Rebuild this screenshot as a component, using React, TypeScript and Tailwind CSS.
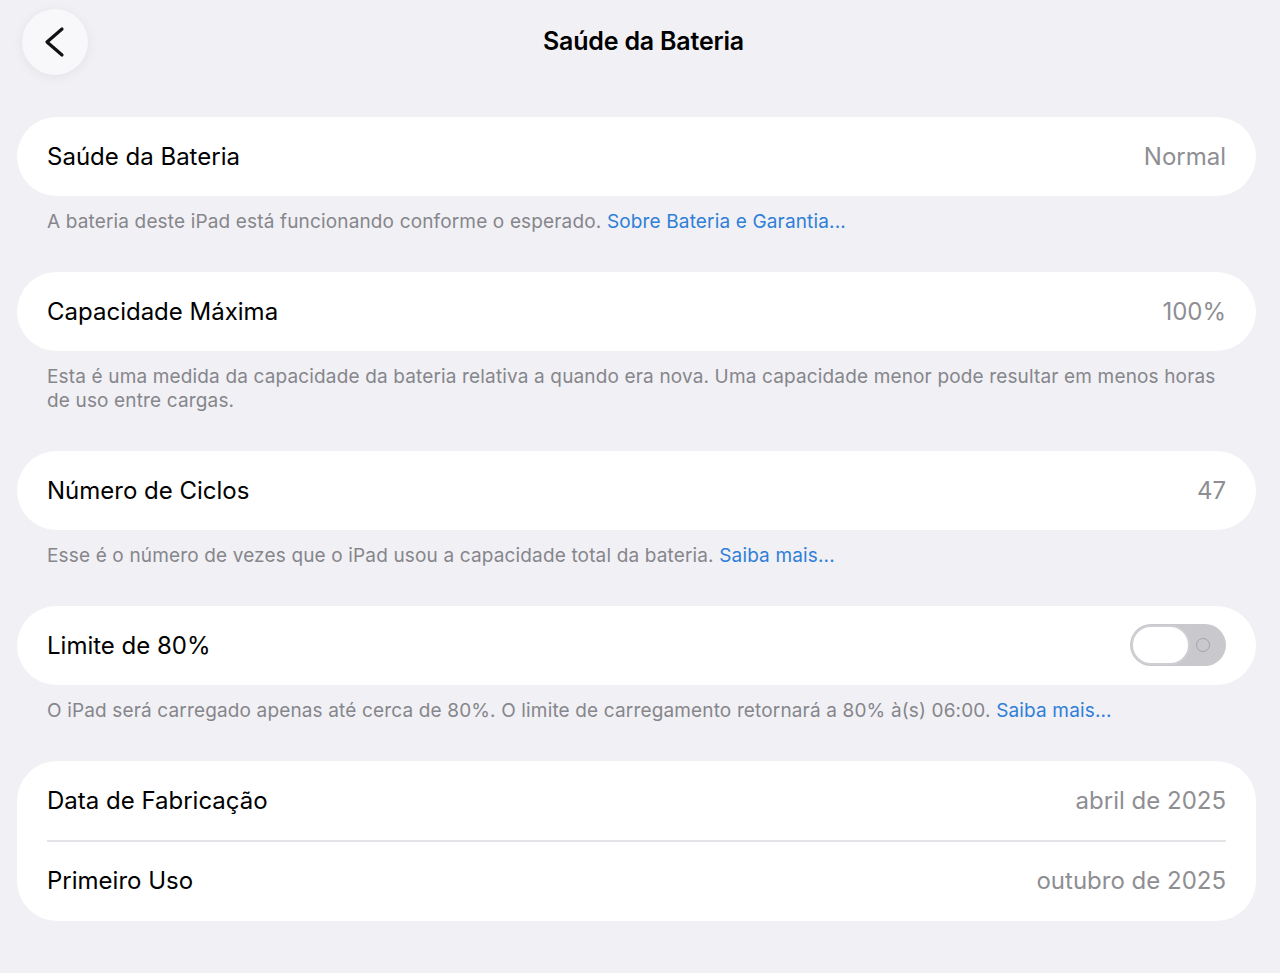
import type { ReactNode } from 'react';

function BackButton() {
  return (
    <button className="-ml-[9px] w-[66px] h-[66px] rounded-full bg-[#f8f8fa] shadow-[0_2px_12px_rgba(0,0,0,0.06)] flex items-center justify-center">
      <svg width="66" height="66" viewBox="0 0 66 66" fill="none">
        <path d="M40 20 L25 33 L40 46" stroke="#111" strokeWidth="3.2" strokeLinecap="round" strokeLinejoin="round" />
      </svg>
    </button>
  );
}

function Toggle() {
  return (
    <div className="relative w-[96px] h-[42px] rounded-full bg-[#c9c9cd] -mt-[2px]">
      <div className="absolute left-[1px] top-[1px] w-[59px] h-[40px] rounded-full bg-white border-2 border-[#cfcfd3]" />
      <div className="absolute left-[66px] top-[14px] w-[14px] h-[14px] rounded-full border-[1.5px] border-[#a3a3a8]" />
    </div>
  );
}

function Row({ label, value }: { label: string; value?: ReactNode }) {
  return (
    <div className="h-[79px] flex items-center justify-between">
      <span className="text-[24px] text-black">{label}</span>
      {typeof value === 'string' ? (
        <span className="text-[24px] text-[#8e8e93]">{value}</span>
      ) : (
        value
      )}
    </div>
  );
}

function Card({ children }: { children: ReactNode }) {
  return <div className="bg-white rounded-[40px] px-[30px]">{children}</div>;
}

function Footer({ children }: { children: ReactNode }) {
  return (
    <p className="px-[30px] pt-[14px] pb-[38px] text-[19px] leading-[24px] tracking-[0.15px] text-[#86868b]">
      {children}
    </p>
  );
}

function Link({ children }: { children: ReactNode }) {
  return <span className="text-[#2f7fd8]">{children}</span>;
}

export default function App() {
  return (
    <div
      className="min-h-[973px] bg-[#f0f0f5] pl-[17px] pr-[24px] pt-[9px]"
      style={{ fontFamily: 'Inter, "Noto Sans", sans-serif' }}
    >
      <div className="grid grid-cols-[1fr_auto_1fr] items-center h-[66px] pl-[14px]">
        <div>
          <BackButton />
        </div>
        <h1 className="text-[25px] font-semibold text-black tracking-[-0.2px]">Saúde da Bateria</h1>
        <div />
      </div>

      <div className="mt-[42px]">
        <Card>
          <Row label="Saúde da Bateria" value="Normal" />
        </Card>
        <Footer>
          A bateria deste iPad está funcionando conforme o esperado. <Link>Sobre Bateria e Garantia...</Link>
        </Footer>

        <Card>
          <Row label="Capacidade Máxima" value="100%" />
        </Card>
        <Footer>
          Esta é uma medida da capacidade da bateria relativa a quando era nova. Uma capacidade menor pode resultar em menos horas de uso entre cargas.
        </Footer>

        <Card>
          <Row label="Número de Ciclos" value="47" />
        </Card>
        <Footer>
          Esse é o número de vezes que o iPad usou a capacidade total da bateria. <Link>Saiba mais...</Link>
        </Footer>

        <Card>
          <Row label="Limite de 80%" value={<Toggle />} />
        </Card>
        <Footer>
          O iPad será carregado apenas até cerca de 80%. O limite de carregamento retornará a 80% à(s) 06:00. <Link>Saiba mais...</Link>
        </Footer>

        <Card>
          <Row label="Data de Fabricação" value="abril de 2025" />
          <div className="h-[1.5px] bg-[#e3e3e8]" />
          <Row label="Primeiro Uso" value="outubro de 2025" />
        </Card>
      </div>
    </div>
  );
}
